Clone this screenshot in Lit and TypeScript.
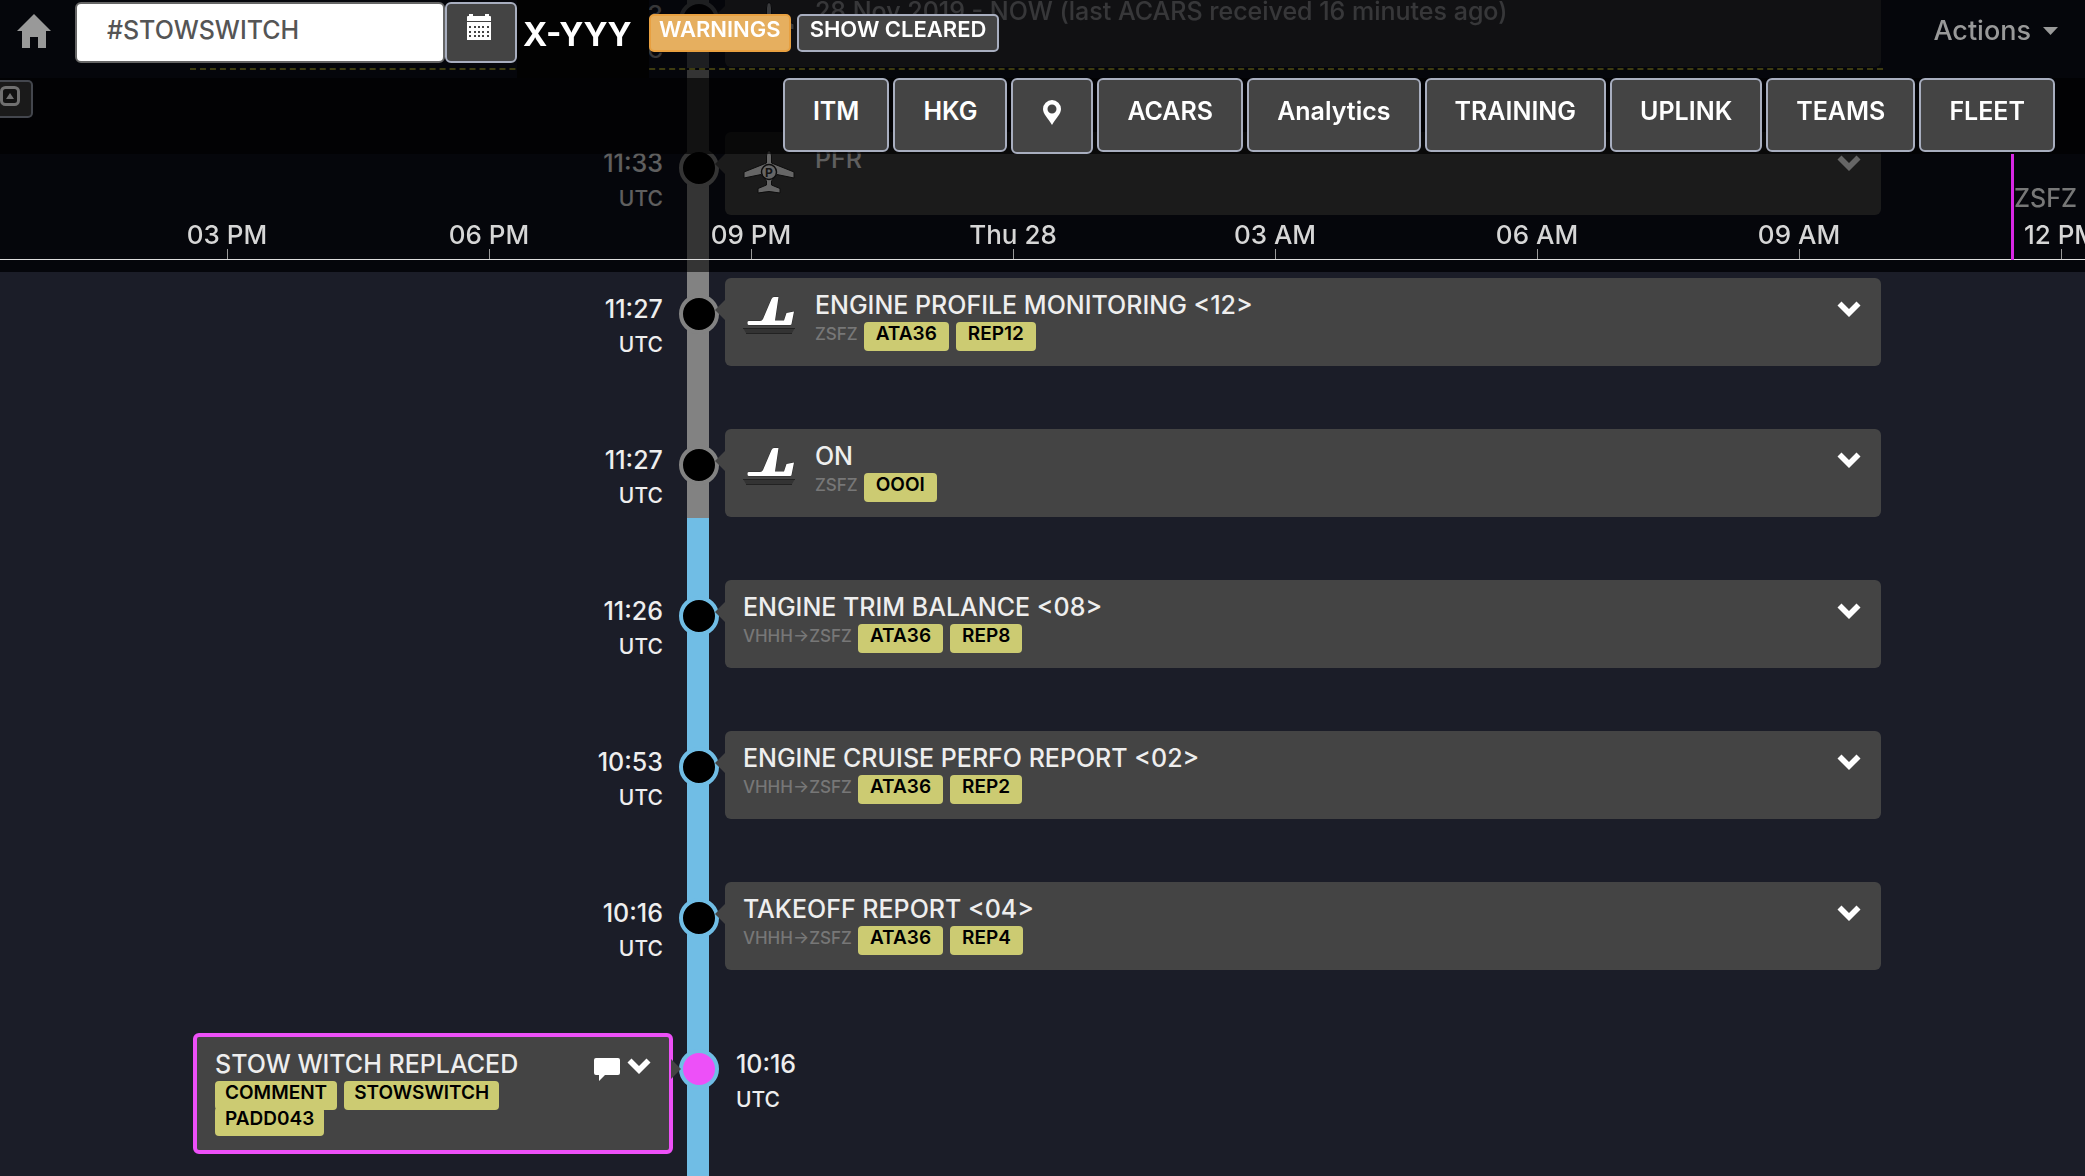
import { LitElement, html, css, svg, nothing } from "lit";
import { customElement, state } from "lit/decorators.js";
import { classMap } from "lit/directives/class-map.js";

type IconName = "landing" | "parked";

interface TimelineEvent {
  title: string;
  time: string;
  phase: "ground" | "flight";
  icon?: IconName;
  route?: string;
  tags?: string[];
  side?: "left" | "right";
  dimmed?: boolean;
  collapsible?: boolean;
}

const EVENTS: TimelineEvent[] = [
  {
    title: "28 Nov 2019 - NOW (last ACARS received 16 minutes ago)",
    time: "11:33",
    phase: "ground",
    icon: "parked",
    dimmed: true,
  },
  { title: "PFR", time: "11:33", phase: "ground", icon: "parked", collapsible: true },
  {
    title: "ENGINE PROFILE MONITORING <12>",
    time: "11:27",
    phase: "ground",
    icon: "landing",
    route: "ZSFZ",
    tags: ["ATA36", "REP12"],
    collapsible: true,
  },
  { title: "ON", time: "11:27", phase: "ground", icon: "landing", route: "ZSFZ", tags: ["OOOI"], collapsible: true },
  { title: "ENGINE TRIM BALANCE <08>", time: "11:26", phase: "flight", route: "VHHH→ZSFZ", tags: ["ATA36", "REP8"], collapsible: true },
  { title: "ENGINE CRUISE PERFO REPORT <02>", time: "10:53", phase: "flight", route: "VHHH→ZSFZ", tags: ["ATA36", "REP2"], collapsible: true },
  { title: "TAKEOFF REPORT <04>", time: "10:16", phase: "flight", route: "VHHH→ZSFZ", tags: ["ATA36", "REP4"], collapsible: true },
  {
    title: "STOW WITCH REPLACED",
    time: "10:16",
    phase: "flight",
    tags: ["COMMENT", "STOWSWITCH", "PADD043"],
    side: "left",
    collapsible: true,
  },
];

const HOURS = ["03 PM", "06 PM", "09 PM", "Thu 28", "03 AM", "06 AM", "09 AM", "12 PM"];
const FILTERS = ["ITM", "HKG", "", "ACARS", "Analytics", "TRAINING", "UPLINK", "TEAMS", "FLEET"];

const chevron = html`<svg width="24" height="17" viewBox="0 0 24 17" aria-hidden="true">
  <path d="M4.5 .5 12 8l7.500-7.500L23.500 4.500 12 16 .500 4.500z" fill="#fff" />
</svg>`;

const comment = html`<svg width="26" height="24" viewBox="0 0 26 24" aria-hidden="true">
  <path d="M2 0h22a2 2 0 0 1 2 2v13a2 2 0 0 1-2 2H11l-6 6v-6H2a2 2 0 0 1-2-2V2a2 2 0 0 1 2-2z" fill="#fff" />
</svg>`;

const landing = html`<svg class="event-icon" width="52" height="40" viewBox="0 0 52 40" aria-hidden="true">
  <path d="M0 32h52l-3 5q-1 1-2 1H5q-1 0-2-1z" fill="#333" />
  <path d="M0 32.500h52M3 37.500h46" stroke="#222" />
  <path
    d="M31 1h4.500L32 24.500h9l2.500-7.500 7.500-1.500L48.500 28q0 1-1.500 1H6q-1.500 0-1.500-1.500V26q0-1 1.500-1h11q2 0 3-2L28.500 3q1-2 2.500-2z"
    fill="#fff" stroke="#2c2c2c" stroke-width="1" paint-order="stroke"
  />
</svg>`;

const parked = html`<svg class="event-icon" width="52" height="44" viewBox="0 0 52 44" aria-hidden="true">
  <path
    d="M26 0q2.500 2 2.500 6v7L51 22v6l-17-3.500L28.500 31v4L37 38.500V43q-11-3-22 0v-4.500L23.500 35v-4L18 24.500 1 28v-6l22.500-9V6Q23.500 2 26 0z"
    fill="#fff" stroke="#222" stroke-width="1"
  />
  <circle cx="26" cy="22" r="7.500" fill="#fff" stroke="#222" stroke-width="1.500" />
  <text x="26" y="26.500" text-anchor="middle" font-family="Inter, sans-serif" font-size="12" font-weight="700" fill="#333">P</text>
</svg>`;

const ICONS = { landing, parked };

const home = html`<svg width="34" height="34" viewBox="0 0 34 34" aria-hidden="true">
  <path d="M17 0 34 17h-5v17h-8V23h-8v11H5V17H0z" fill="#999" />
</svg>`;

const calendarDots = [12, 17, 21].flatMap((y) =>
  [2, 7, 11, 15, 20].map((x) => svg`<rect x=${x} y=${y} width="2" height="2" fill="#444"></rect>`)
);

const calendar = html`<svg width="24" height="26" viewBox="0 0 24 26" aria-hidden="true">
  <path d="M1 2h1V0h4v2h12V0h4v2h1q1 0 1 1v4H0V3q0-1 1-1zM0 8h24v18H0z" fill="#fff" />
  ${calendarDots}
</svg>`;

const pin = html`<svg width="18" height="25" viewBox="0 0 18 25" aria-hidden="true">
  <path
    fill="#fff" fill-rule="evenodd"
    d="M9 0a9 9 0 0 1 9 9c0 5-5 9-9 16C5 18 0 14 0 9a9 9 0 0 1 9-9zm0 4.500a4.500 4.500 0 1 0 0 9 4.500 4.500 0 0 0 0-9z"
  />
</svg>`;

const collapse = html`<svg width="22" height="20" viewBox="0 0 22 20" aria-hidden="true">
  <rect x="3.500" y="1.500" width="17" height="17" rx="4" fill="#111" stroke="#707070" stroke-width="3" />
  <path d="M8 13h8l-4-6z" fill="#707070" />
</svg>`;

@customElement("app-root")
export class AppRoot extends LitElement {
  static styles = css`
    :host {
      display: block;
      height: 100vh;
      overflow: hidden;
      position: relative;
      background: linear-gradient(#0e101c 272px, #1b1d28 272px);
      color: #eee;
      font-family: Inter, "Liberation Sans", sans-serif;
      font-size: 25px;
      font-weight: 500;
      line-height: 30px;
    }
    * { box-sizing: border-box; }
    svg { display: block; flex: none; }
    button, input { font: inherit; color: inherit; margin: 0; }
    button { padding: 0; cursor: pointer; }

    .header {
      position: absolute;
      inset: 0 0 auto 0;
      z-index: 2;
      background: rgba(0, 0, 0, 0.6);
    }
    .nav { display: flex; align-items: flex-start; height: 78px; padding: 0 27px 0 17px; }
    .home { padding: 14px 24px 0 0; }
    .search {
      width: 370px;
      height: 61px;
      margin-top: 2px;
      padding: 0 30px 6px;
      border: 2px solid #666;
      border-radius: 6px;
      background: #fff;
      color: #555;
    }
    .calendar {
      display: flex;
      justify-content: center;
      width: 72px;
      height: 61px;
      margin-top: 2px;
      padding: 10px 4px 0 0;
      border: 2px solid #a8aebf;
      border-radius: 6px;
      background: #444;
    }
    .tail {
      width: 132px;
      height: 78px;
      margin: 0;
      padding-left: 6px;
      background: #020202;
      color: #fff;
      font-size: 33px;
      font-weight: 700;
      line-height: 69px;
    }
    .chip {
      height: 38px;
      margin: 14px 6px 0 0;
      padding: 0 11px 8px;
      border: 2px solid #a8aebf;
      border-radius: 5px;
      background: #444;
      color: #fff;
      font-size: 22px;
      font-weight: 600;
      line-height: 26px;
    }
    .chip.warn { padding: 0 8px 8px; background: #e6af5f; border-color: #e8a040; }
    .actions {
      display: flex;
      align-items: center;
      gap: 12px;
      margin: 16px 0 0 auto;
      border: 0;
      background: none;
      color: #999;
      font-size: 27px;
    }

    .toolbar {
      display: flex;
      align-items: flex-start;
      gap: 4px;
      height: 76px;
      padding-right: 30px;
      background: rgba(0, 0, 0, 0.65);
    }
    .collapse {
      width: 33px;
      height: 38px;
      margin: 2px auto 0 0;
      padding: 0 0 6px;
      border: 2px solid #43464d;
      border-left: 0;
      border-radius: 0 5px 5px 0;
      background: #1a1a1a;
    }
    .collapse svg { margin-left: -2px; }
    .filter {
      display: flex;
      align-items: center;
      height: 74px;
      padding: 0 28px 8px;
      border: 2px solid #a8aebf;
      border-radius: 6px;
      background: #444;
      color: #fff;
      font-weight: 600;
    }
    .filter.pin { height: 76px; padding: 0 30px 8px; }

    .axis { position: relative; height: 118px; padding: 67px 0 0 96px; overflow: hidden; color: #d6d6d6; }
    .hours {
      display: grid;
      grid-template-columns: repeat(8, 262px);
      height: 39px;
      margin: 0 0 0 -96px;
      padding-left: 96px;
      border-bottom: 1px solid #ddd;
    }
    .hour { display: flex; flex-direction: column; align-items: center; font-size: 26px; line-height: 28px; }
    .hour::after { content: ""; width: 1px; height: 10px; background: #999; }
    .marker {
      position: absolute;
      top: 0;
      right: 0;
      width: 74px;
      height: 106px;
      padding-top: 29px;
      border-left: 3px solid #d828e4;
      color: #777;
    }

    .timeline {
      display: flex;
      flex-direction: column;
      height: calc(100% + 78px);
      margin: -78px 0 0;
      padding: 0 202px 0 190px;
      list-style: none;
    }
    .row {
      display: grid;
      grid-template-columns: calc(30% - 11px) 22px minmax(0, 1fr);
      align-items: start;
      flex: none;
    }
    .row:last-child { flex: 1; }
    .row.dimmed { border-bottom: 2px dashed #98942a; }
    .row.dimmed > * { opacity: 0.55; }
    .rail { align-self: stretch; padding-top: 78px; background: #828282; }
    .dot {
      width: 40px;
      height: 40px;
      margin-left: -8px;
      border: 4px solid #828282;
      border-radius: 50%;
      background: #000;
    }
    .flight .rail { background: #70bde5; }
    .flight .dot { border-color: #70bde5; }
    .selected .dot { background: #ed50f8; }

    .time { display: flex; flex-direction: column; padding: 76px 24px 0; line-height: 35px; text-align: right; }
    .zone { font-size: 21px; }
    .selected .time { padding: 76px 27px 0; text-align: left; }

    .card {
      position: relative;
      display: flex;
      align-items: flex-start;
      min-height: 83px;
      margin: 62px 2px 1px 16px;
      padding: 12px 20px 12px 18px;
      border-radius: 6px;
      background: #444;
    }
    .card.tagged { padding-bottom: 15px; }
    .card::before {
      content: "";
      position: absolute;
      top: 22px;
      left: -10px;
      border: 10px solid transparent;
      border-left-width: 0;
      border-right-color: #444;
    }
    .selected .card { margin: 62px 14px 0 3px; padding-right: 18px; border: 4px solid #ed50f8; }
    .selected .card::before {
      left: auto;
      right: -12px;
      border-width: 10px 0 10px 10px;
      border-color: transparent transparent transparent #444;
    }
    .event-icon { margin: 6px 20px 0 0; }
    .body { flex: 1; min-width: 0; }
    .title { margin: 0; font: inherit; }
    .meta { display: flex; flex-wrap: wrap; gap: 0 7px; margin-top: 2px; line-height: 24px; }
    .route { margin-right: -1px; color: #777; font-size: 17px; }
    .tag {
      height: 29px;
      padding: 0 12px;
      border-radius: 4px;
      background: #cccb72;
      color: #000;
      font-size: 19px;
      font-weight: 600;
    }
    .selected .tag { padding: 0 10px; margin-bottom: -3px; }
    .selected .meta { padding-bottom: 2px; }
    .toggle { display: flex; align-items: flex-start; gap: 7px; margin-top: 11px; border: 0; background: none; }
    .selected .toggle { margin-top: 9px; }
  `;

  @state() private query = "#STOWSWITCH";

  private renderEvent(e: TimelineEvent) {
    const selected = e.side === "left";
    const time = html`<div class="time"><span>${e.time}</span><span class="zone">UTC</span></div>`;
    const card = html`<article class=${classMap({ card: true, tagged: !!e.tags })}>
      ${e.icon ? ICONS[e.icon] : nothing}
      <div class="body">
        <h2 class="title">${e.title}</h2>
        ${e.tags
          ? html`<div class="meta">
              ${e.route ? html`<span class="route">${e.route}</span>` : nothing}
              ${e.tags.map((t) => html`<span class="tag">${t}</span>`)}
            </div>`
          : nothing}
      </div>
      ${e.collapsible
        ? html`<button class="toggle" aria-label="Expand">${selected ? comment : nothing}${chevron}</button>`
        : nothing}
    </article>`;
    const rail = html`<div class="rail"><div class="dot"></div></div>`;
    return html`<li class=${classMap({ row: true, flight: e.phase === "flight", selected, dimmed: !!e.dimmed })}>
      ${selected ? [card, rail, time] : [time, rail, card]}
    </li>`;
  }

  render() {
    return html`
      <header class="header">
        <nav class="nav">
          <a class="home" href="#" aria-label="Home">${home}</a>
          <input
            class="search"
            type="text"
            aria-label="Search"
            .value=${this.query}
            @input=${(ev: Event) => (this.query = (ev.target as HTMLInputElement).value)}
          />
          <button class="calendar" aria-label="Pick a date">${calendar}</button>
          <h1 class="tail">X-YYY</h1>
          <button class="chip warn">WARNINGS</button>
          <button class="chip">SHOW CLEARED</button>
          <button class="actions">
            Actions
            <svg width="15" height="8" viewBox="0 0 15 8" aria-hidden="true"><path d="M0 0h15L7.500 8z" fill="#999" /></svg>
          </button>
        </nav>
        <div class="toolbar">
          <button class="collapse" aria-label="Collapse">${collapse}</button>
          ${FILTERS.map((f) =>
            f
              ? html`<button class="filter">${f}</button>`
              : html`<button class="filter pin" aria-label="Location">${pin}</button>`
          )}
        </div>
        <div class="axis">
          <div class="hours">${HOURS.map((h) => html`<span class="hour">${h}</span>`)}</div>
          <div class="marker">ZSFZ</div>
        </div>
      </header>
      <ol class="timeline">${EVENTS.map((e) => this.renderEvent(e))}</ol>
    `;
  }
}
